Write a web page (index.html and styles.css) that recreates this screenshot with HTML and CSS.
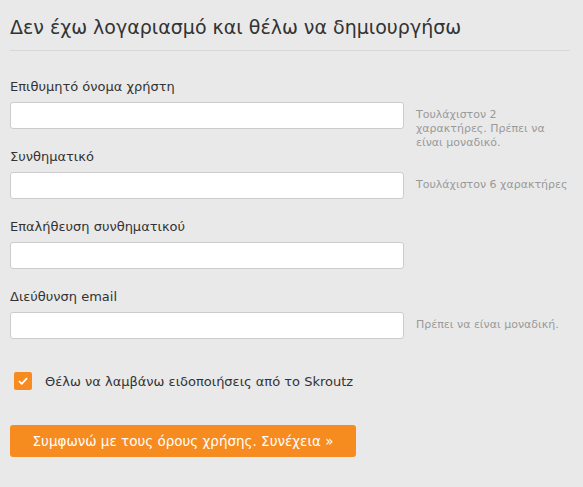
FILE: index.html
```html
<!DOCTYPE html>
<html lang="el">
<head>
  <meta charset="UTF-8" />
  <title>Εγγραφή</title>
  <link rel="stylesheet" href="styles.css">
</head>
<body>
<div class="signup">
  <h2 class="signup-title">Δεν έχω λογαριασμό και θέλω να δημιουργήσω</h2>

  <div class="field">
    <label for="username">Επιθυμητό όνομα χρήστη</label>
    <div class="field-row">
      <input type="text" id="username">
      <span class="hint">Τουλάχιστον 2 χαρακτήρες. Πρέπει να είναι μοναδικό.</span>
    </div>
  </div>

  <div class="field">
    <label for="password">Συνθηματικό</label>
    <div class="field-row">
      <input type="password" id="password">
      <span class="hint">Τουλάχιστον 6 χαρακτήρες</span>
    </div>
  </div>

  <div class="field">
    <label for="password2">Επαλήθευση συνθηματικού</label>
    <div class="field-row">
      <input type="password" id="password2">
      <span class="hint"></span>
    </div>
  </div>

  <div class="field">
    <label for="email">Διεύθυνση email</label>
    <div class="field-row">
      <input type="text" id="email">
      <span class="hint">Πρέπει να είναι μοναδική.</span>
    </div>
  </div>

  <label class="check">
    <span class="check-box">
      <svg width="10" height="8" viewBox="0 0 10 8"><path d="M1 4.2 L3.8 6.8 L9 1.2" fill="none" stroke="#fff" stroke-width="1.8"/></svg>
    </span>
    Θέλω να λαμβάνω ειδοποιήσεις από το Skroutz
  </label>

  <button class="submit-btn">Συμφωνώ με τους όρους χρήσης. Συνέχεια »</button>
</div>
</body>
</html>
```

FILE: styles.css
```css
body {
  margin: 0;
  background: #e9e9e9;
  font-family: "DejaVu Sans", Verdana, sans-serif;
  color: #333;
}

.signup {
  width: 560px;
  padding: 0 0 0 10px;
}

.signup-title {
  margin: 0;
  padding: 16px 0 12px;
  font-size: 19px;
  font-weight: normal;
  color: #333;
  border-bottom: 1px solid #d8d8d8;
}

.field {
  margin-top: 28px;
}
.field + .field {
  margin-top: 20px;
}

.field label {
  display: block;
  font-size: 13px;
  line-height: 15px;
  color: #333;
  margin-bottom: 8px;
}

/* το hint δεν πρέπει να μεγαλώνει τη γραμμή */
.field-row {
  display: grid;
  grid-template-columns: 394px 1fr;
  column-gap: 12px;
  align-items: start;
  height: 27px;
  overflow: visible;
}

.field-row input {
  height: 27px;
  box-sizing: border-box;
  border: 1px solid #ccc;
  border-radius: 3px;
  background: #fff;
  margin: 0;
}

.hint {
  font-size: 11px;
  line-height: 14px;
  color: #999;
  padding-top: 6px;
}

.check {
  display: flex;
  align-items: center;
  margin: 33px 0 0 4px;
  font-size: 13px;
  color: #333;
}

.check-box {
  width: 18px;
  height: 18px;
  border-radius: 2px;
  background: #f68b1f;
  display: flex;
  justify-content: center;
  align-items: center;
  margin-right: 13px;
}

.submit-btn {
  display: block;
  margin-top: 35px;
  width: 346px;
  height: 32px;
  border: none;
  border-radius: 3px;
  background: #f68b1f;
  color: #fff;
  font-family: inherit;
  font-size: 13.5px;
  cursor: pointer;
}
```
